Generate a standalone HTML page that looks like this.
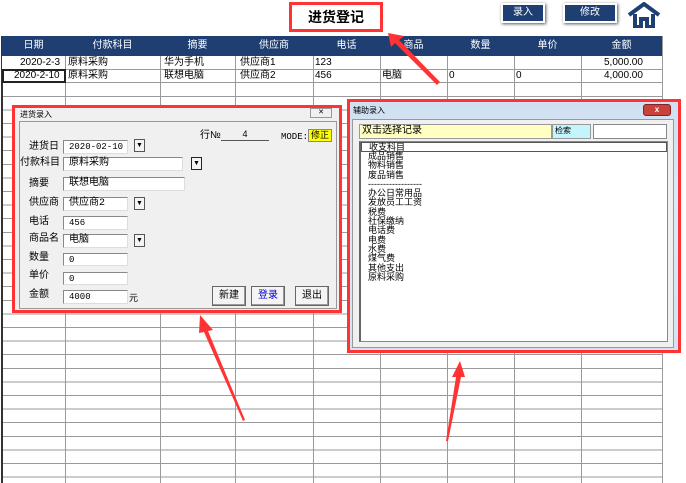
<!DOCTYPE html>
<html><head><meta charset="utf-8"><style>
*{margin:0;padding:0;box-sizing:border-box}
body{width:686px;height:483px;overflow:hidden;background:#fff;position:relative;font-family:"Liberation Sans","Noto Sans CJK SC",sans-serif;font-size:10px;color:#000}
.a{position:absolute}
.grid{left:2px;top:56px;width:660px;height:427px;background:
repeating-linear-gradient(to bottom,transparent 0 12.6px,#9a9a9a 12.6px 13.6px);}
.vl{position:absolute;top:36px;height:447px;width:1px;background:#9a9a9a}
.hd{left:2px;top:36px;width:660px;height:20px;background:#1f3f73}
.hd span{position:absolute;top:3px;color:#fff;font-size:10px;line-height:13px;text-align:center}
.c{position:absolute;font-size:10px;line-height:13px;white-space:nowrap}
.btn{background:#1f3f73;color:#fff;border:2px solid #fff;box-shadow:1px 1px 3px #555;text-align:center;font-size:10px;line-height:16px}
.dlg{background:#f0f0f0;border:3px solid #f33}
.tb{position:absolute;background:#fff;border:1px solid #888;border-right-color:#ddd;border-bottom-color:#ddd;font-size:9px;padding-left:5px;line-height:12px;font-family:"Liberation Mono","Noto Sans CJK SC",monospace}
.lb{position:absolute;font-size:10px;line-height:12px}
.dd{position:absolute;width:11px;height:13px;border:1px solid #555;background:#f4f4f4;font-size:7px;text-align:center;line-height:11px}
.pb{position:absolute;border:1px solid #666;background:#f4f4f4;font-size:10px;text-align:center;line-height:18px;box-shadow:inset -1px -1px #999}
</style></head><body>
<div class="a grid"></div>
<div class="a" style="left:1px;top:36px;width:2px;height:447px;background:#333"></div>
<div class="vl" style="left:65px"></div><div class="vl" style="left:160px"></div><div class="vl" style="left:235px"></div><div class="vl" style="left:313px"></div><div class="vl" style="left:380px"></div><div class="vl" style="left:447px"></div><div class="vl" style="left:514px"></div><div class="vl" style="left:581px"></div><div class="vl" style="left:662px"></div>
<div class="a hd">
<span style="left:0;width:63px">日期</span><span style="left:63px;width:95px">付款科目</span><span style="left:158px;width:75px">摘要</span><span style="left:233px;width:78px">供应商</span><span style="left:311px;width:67px">电话</span><span style="left:378px;width:67px">商品</span><span style="left:445px;width:67px">数量</span><span style="left:512px;width:67px">单价</span><span style="left:579px;width:81px">金额</span>
</div>
<div class="a" style="left:2px;top:56px;width:660px;height:27px;background:#fff"></div>
<div class="a" style="left:2px;top:69px;width:660px;height:1px;background:#9a9a9a"></div>
<div class="a" style="left:2px;top:82px;width:660px;height:1px;background:#9a9a9a"></div>
<div class="vl" style="left:65px;top:56px;height:27px"></div><div class="vl" style="left:160px;top:56px;height:27px"></div><div class="vl" style="left:235px;top:56px;height:27px"></div><div class="vl" style="left:313px;top:56px;height:27px"></div><div class="vl" style="left:380px;top:56px;height:27px"></div><div class="vl" style="left:447px;top:56px;height:27px"></div><div class="vl" style="left:514px;top:56px;height:27px"></div><div class="vl" style="left:581px;top:56px;height:27px"></div>
<div class="a" style="left:2px;top:69px;width:64px;height:14px;border:2px solid #222"></div>
<div class="c" style="left:20px;top:56px">2020-2-3</div><div class="c" style="left:68px;top:56px">原料采购</div><div class="c" style="left:164px;top:56px">华为手机</div><div class="c" style="left:240px;top:56px">供应商1</div><div class="c" style="left:315px;top:56px">123</div><div class="c" style="left:604px;top:56px">5,000.00</div>
<div class="c" style="left:14px;top:69px">2020-2-10</div><div class="c" style="left:68px;top:69px">原料采购</div><div class="c" style="left:164px;top:69px">联想电脑</div><div class="c" style="left:240px;top:69px">供应商2</div><div class="c" style="left:315px;top:69px">456</div><div class="c" style="left:382px;top:69px">电脑</div><div class="c" style="left:449px;top:69px">0</div><div class="c" style="left:516px;top:69px">0</div><div class="c" style="left:604px;top:69px">4,000.00</div>

<div class="a" style="left:0;top:0;width:686px;height:36px;background:#fff"></div>
<div class="a" style="left:289px;top:2px;width:94px;height:30px;border:3px solid #f33;font-size:14px;font-weight:bold;text-align:center;line-height:24px">进货登记</div>
<div class="a btn" style="left:501px;top:3px;width:44px;height:20px">录入</div>
<div class="a btn" style="left:563px;top:3px;width:54px;height:20px">修改</div>
<svg class="a" style="left:627px;top:2px" width="34" height="26" viewBox="0 0 34 26"><path d="M2 13 L17 2 L32 13" fill="none" stroke="#1f3f73" stroke-width="4"/><path d="M8 12 V25 H14 V17 H20 V25 H26 V12" fill="none" stroke="#1f3f73" stroke-width="4"/></svg>

<!-- dialog 1 -->
<div class="a dlg" style="left:12px;top:105px;width:330px;height:208px">
<div class="a" style="left:5px;top:2px;font-size:8px;line-height:10px">进货录入</div>
<div class="a" style="left:295px;top:0;width:22px;height:10px;border:1px solid #999;font-size:7px;text-align:center;line-height:8px">✕</div>
<div class="a" style="left:4px;top:13px;width:318px;height:188px;border:1px solid #999"></div>
<div class="lb" style="left:185px;top:22px">行№</div><div class="a" style="left:206px;top:21px;width:48px;height:12px;border-bottom:1px solid #555;font-size:9px;line-height:11px;text-align:center">4</div>
<div class="lb" style="left:266px;top:23px;font-size:9px;font-family:'Liberation Mono',monospace">MODE:</div><div class="a" style="left:293px;top:21px;width:24px;height:13px;background:#ff0;border:1px solid #888;font-size:9px;text-align:center;line-height:11px">修正</div>
<div class="lb" style="left:14px;top:33px">进货日</div><div class="tb" style="left:48px;top:32px;width:65px;height:14px">2020-02-10</div><div class="dd" style="left:119px;top:31px">▼</div>
<div class="lb" style="left:5px;top:49px">付款科目</div><div class="tb" style="left:48px;top:49px;width:120px;height:14px;font-size:10px">原料采购</div><div class="dd" style="left:176px;top:49px;border-color:#222">▼</div>
<div class="lb" style="left:14px;top:70px">摘要</div><div class="tb" style="left:48px;top:69px;width:122px;height:14px;font-size:10px">联想电脑</div>
<div class="lb" style="left:14px;top:89px">供应商</div><div class="tb" style="left:48px;top:89px;width:65px;height:14px;font-size:10px">供应商2</div><div class="dd" style="left:119px;top:89px">▼</div>
<div class="lb" style="left:14px;top:108px">电话</div><div class="tb" style="left:48px;top:108px;width:65px;height:14px">456</div>
<div class="lb" style="left:14px;top:125px">商品名</div><div class="tb" style="left:48px;top:126px;width:65px;height:14px;font-size:10px">电脑</div><div class="dd" style="left:119px;top:126px">▼</div>
<div class="lb" style="left:14px;top:144px">数量</div><div class="tb" style="left:48px;top:145px;width:65px;height:13px">0</div>
<div class="lb" style="left:14px;top:162px">单价</div><div class="tb" style="left:48px;top:164px;width:65px;height:13px">0</div>
<div class="lb" style="left:14px;top:181px">金额</div><div class="tb" style="left:48px;top:182px;width:65px;height:14px">4000</div><div class="lb" style="left:114px;top:184px;font-size:9px">元</div>
<div class="pb" style="left:197px;top:178px;width:34px;height:20px">新建</div>
<div class="pb" style="left:236px;top:178px;width:34px;height:20px;color:#00c">登录</div>
<div class="pb" style="left:280px;top:178px;width:34px;height:20px">退出</div>
</div>

<!-- dialog 2 -->
<div class="a" style="left:347px;top:99px;width:334px;height:254px;border:3px solid #f33;background:linear-gradient(#cfe0f2,#dde9f6 40%,#d3e3f3)">
<div class="a" style="left:3px;top:4px;font-size:8px;line-height:10px">辅助录入</div>
<div class="a" style="left:293px;top:2px;width:28px;height:12px;background:#c8413a;border:1px solid #822;border-radius:3px;color:#fff;font-size:8px;text-align:center;line-height:10px;font-weight:bold">x</div>
<div class="a" style="left:2px;top:17px;width:322px;height:229px;background:#f0f0f0;border:1px solid #999">
<div class="a" style="left:6px;top:4px;width:193px;height:15px;background:#ffffc4;border:1px solid #999;font-size:10px;line-height:12px;padding-left:2px">双击选择记录</div>
<div class="a" style="left:199px;top:4px;width:39px;height:15px;background:#c4f4fc;border:1px solid #999;font-size:8px;line-height:11px;padding-left:2px">检索</div>
<div class="a" style="left:240px;top:4px;width:74px;height:15px;background:#fff;border:1px solid #888"></div>
<div class="a" style="left:6px;top:21px;width:309px;height:201px;background:#fff;border:1px solid #888;border-left:2px solid #666;padding:0 0 0 7px;font-size:9px;line-height:9.3px">
<div style="border:1px solid #555;margin-left:-7px;padding-left:7px;height:10px;line-height:8px">收支科目</div>成品销售<br>物料销售<br>废品销售<br>------------------<br>办公日常用品<br>发放员工工资<br>税费<br>社保缴纳<br>电话费<br>电费<br>水费<br>煤气费<br>其他支出<br>原料采购
</div></div></div>

<!-- arrows -->
<svg class="a" style="left:0;top:0" width="686" height="483">
<g fill="#f33">
<polygon points="388,33 404,36 399,40 440,82 437,85 395,43 391,47"/>
<polygon points="200,315 213,330 208,331 245,420 243,421 204,332 199,333"/>
<polygon points="460,361 465,377 461,377 448,441 446,441 456,377 452,377"/>
</g></svg>
</body></html>
